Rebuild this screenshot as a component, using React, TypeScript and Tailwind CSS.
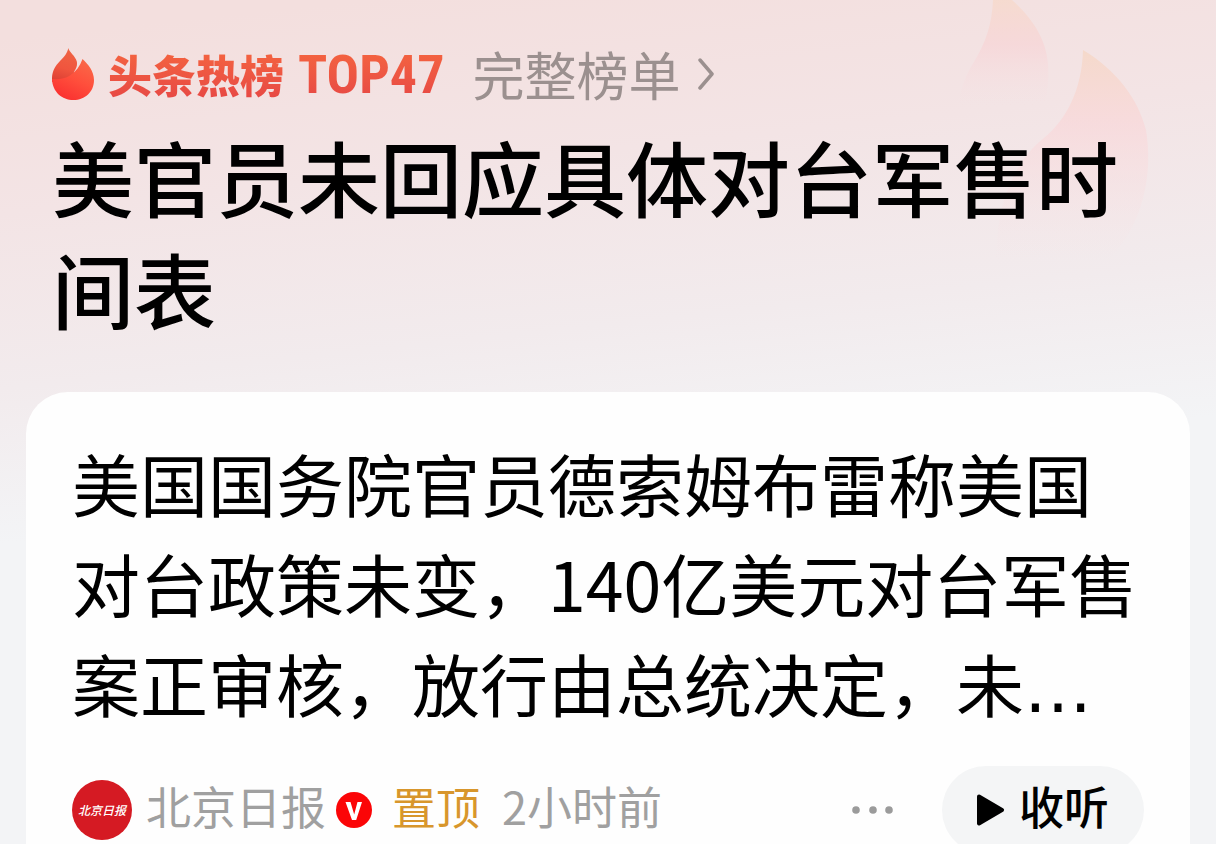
import React from "react";

function FlameIcon() {
  return (
    <svg viewBox="0 0 42 52" className="h-[52px] w-[42px] shrink-0" aria-hidden="true">
      <defs>
        <linearGradient id="flameBack" x1="0.6" y1="0" x2="0.4" y2="1">
          <stop offset="0" stopColor="#ef6444" />
          <stop offset="0.6" stopColor="#f0553e" />
          <stop offset="1" stopColor="#dd4034" />
        </linearGradient>
        <linearGradient id="flameFront" x1="0.8" y1="0" x2="0.3" y2="1">
          <stop offset="0" stopColor="#f96a48" />
          <stop offset="0.5" stopColor="#ff4f3c" />
          <stop offset="1" stopColor="#fa3030" />
        </linearGradient>
      </defs>
      <path
        d="M16.300 0C17 4 23.500 8 24.800 13.500C25.500 17 24.500 20 22.500 23L20 30L0 34C-0.500 25 2 19 8 13C12 9 15.500 5 16.300 0Z"
        fill="url(#flameBack)"
      />
      <path
        d="M30.500 11C36 16 42 23 42 32C42 44 33 52 21.500 52C10 52 0.500 44 0 31C6 31.500 13 31 18 27.500C24 23.500 28 18 30.500 11Z"
        fill="url(#flameFront)"
      />
    </svg>
  );
}

function BackdropFlame() {
  return (
    <svg
      viewBox="0 0 240 270"
      className="pointer-events-none absolute top-0 right-[20px] h-[270px] w-[240px]"
      aria-hidden="true"
    >
      <defs>
        <linearGradient id="tongueLeft" x1="0" y1="0" x2="0" y2="1">
          <stop offset="0" stopColor="#f7d8c8" stopOpacity="0.7" />
          <stop offset="0.3" stopColor="#f8d2d4" stopOpacity="0.6" />
          <stop offset="0.7" stopColor="#f7dfe2" stopOpacity="0" />
        </linearGradient>
        <linearGradient id="tongueRight" x1="0" y1="0" x2="0" y2="1">
          <stop offset="0" stopColor="#f5d8c8" stopOpacity="0.9" />
          <stop offset="0.35" stopColor="#f9d7d9" stopOpacity="0.7" />
          <stop offset="1" stopColor="#f7e4e6" stopOpacity="0" />
        </linearGradient>
      </defs>
      <path
        d="M37 0H56C76 18 90 38 92 64C94 90 88 120 70 150L0 150C-2 110 4 84 18 62C30 42 36 24 37 0Z"
        fill="url(#tongueLeft)"
      />
      <path
        d="M127 50C160 70 182 98 190 130C198 180 184 230 150 262L40 262C40 200 60 160 88 138C110 120 126 90 127 50Z"
        fill="url(#tongueRight)"
      />
    </svg>
  );
}

function HotListBar() {
  return (
    <div className="flex h-[56px] items-center">
      <FlameIcon />
      <div className="ml-[14px] flex items-baseline gap-[14px] bg-linear-to-b from-[#f5663f] to-[#e64645] bg-clip-text leading-[56px] font-bold whitespace-nowrap text-transparent">
        <span className="text-[44px] font-black">头条热榜</span>
        <span className="font-['Roboto_Condensed','Roboto',sans-serif] text-[54px]">TOP47</span>
      </div>
      <a href="#full-list" className="ml-[28px] flex items-center gap-[18px] whitespace-nowrap text-[#9b908f]">
        <span className="text-[52px] leading-[56px]">完整榜单</span>
        <svg viewBox="0 0 16 32" className="h-8 w-4" fill="none" aria-hidden="true">
          <path d="M2 2L14 16L2 30" stroke="currentColor" strokeWidth="3.500" strokeLinecap="round" strokeLinejoin="round" />
        </svg>
      </a>
    </div>
  );
}

function SourceAvatar() {
  return (
    <span className="flex size-[60px] shrink-0 items-center justify-center rounded-full bg-[#d51a23]">
      <span className="text-[12px] leading-none font-medium text-white italic">北京日报</span>
    </span>
  );
}

function VerifiedBadge() {
  return (
    <svg viewBox="0 0 36 36" className="ml-[10px] size-9 shrink-0" role="img" aria-label="V">
      <circle cx="18" cy="18" r="18" fill="#fb0507" />
      <path d="M9.500 10H14.500L18.200 22.500L21.500 10H26L20.200 28H16Z" fill="#fff" />
    </svg>
  );
}

function CardFooter() {
  return (
    <div className="flex h-[88px] items-center whitespace-nowrap text-[45px] leading-[60px] text-[#a0a0a0]">
      <SourceAvatar />
      <span className="ml-[14px] pb-2">北京日报</span>
      <VerifiedBadge />
      <span className="ml-[20px] pb-2 text-[44px] text-[#d8962c]">置顶</span>
      <time className="ml-[22px] pb-2">2小时前</time>
      <button type="button" aria-label="更多" className="ml-auto">
        <svg viewBox="0 0 42 8" className="h-2 w-[42px]" fill="#9b9b9b" aria-hidden="true">
          <circle cx="4" cy="4" r="3.800" />
          <circle cx="21" cy="4" r="3.800" />
          <circle cx="37" cy="4" r="3.800" />
        </svg>
      </button>
      <button
        type="button"
        className="ml-[48px] flex h-[88px] w-[202px] items-center justify-center gap-[14px] rounded-full bg-[#f4f5f6] font-medium text-black"
      >
        <svg viewBox="0 0 28 32" className="h-8 w-7" aria-hidden="true">
          <path d="M2 2.500L25 16L2 29.500Z" fill="#000" stroke="#000" strokeWidth="4" strokeLinejoin="round" />
        </svg>
        <span className="pb-2">收听</span>
      </button>
    </div>
  );
}

export default function App() {
  return (
    <main
      className="relative h-screen overflow-hidden bg-[linear-gradient(174deg,#f3dfde_4%,#f3e4e5_22%,#f2ebed_40%,#f3f4f6_56%)] font-['Noto_Sans_CJK_SC',sans-serif] text-black"
      lang="zh-CN"
    >
      <BackdropFlame />
      <div className="relative">
        <header className="px-[52px] pt-[46px]">
          <HotListBar />
          <h1 className="mt-[18px] text-[82px] leading-[112px] font-medium">美官员未回应具体对台军售时间表</h1>
        </header>
        <article className="mx-[26px] mt-[48px] rounded-t-[42px] bg-[#fefefe] px-[46px] pt-[41px]">
          <p className="text-[68px] leading-[100px]">
            美国国务院官员德索姆布雷称美国对台政策未变，140亿美元对台军售案正审核，放行由总统决定，未
            <span className="font-['DejaVu_Sans',sans-serif]">…</span>
          </p>
          <div className="pt-[27px]">
            <CardFooter />
          </div>
        </article>
      </div>
    </main>
  );
}
